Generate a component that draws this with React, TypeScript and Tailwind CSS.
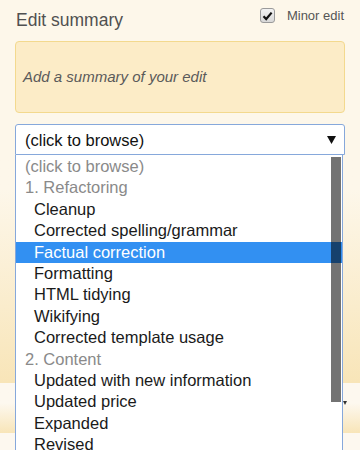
import { useState } from "react";

const options: { label: string; group?: boolean }[] = [
  { label: "(click to browse)", group: true },
  { label: "1. Refactoring", group: true },
  { label: "Cleanup" },
  { label: "Corrected spelling/grammar" },
  { label: "Factual correction" },
  { label: "Formatting" },
  { label: "HTML tidying" },
  { label: "Wikifying" },
  { label: "Corrected template usage" },
  { label: "2. Content", group: true },
  { label: "Updated with new information" },
  { label: "Updated price" },
  { label: "Expanded" },
  { label: "Revised" },
];

export default function App() {
  const [minor, setMinor] = useState(true);
  const [selected] = useState(4);

  return (
    <div
      className="relative w-[360px] h-[450px] overflow-hidden bg-[#fdf7ea] text-[#222]"
      style={{ fontFamily: '"Liberation Sans", Arial, sans-serif' }}
    >
      {/* header */}
      <div className="flex justify-between h-[41px] px-[15px]">
        <h2 className="pl-px pt-[10px] text-[17.5px] leading-[20px] text-[#505050] font-normal">
          Edit summary
        </h2>
        <label className="flex items-start gap-[12px] pt-[8px] pr-[1px] cursor-pointer">
          <span
            onClick={() => setMinor(!minor)}
            className="w-[15px] h-[15px] rounded-[3px] border border-[#9a9a9a] bg-gradient-to-b from-[#f2f2f2] to-[#d8d8d8] flex items-center justify-center"
          >
            {minor && (
              <svg width="11" height="10" viewBox="0 0 11 10">
                <path d="M1.5 5.2 L4.2 8 L9.6 1.6" fill="none" stroke="#111" strokeWidth="2.2" />
              </svg>
            )}
          </span>
          <span className="text-[13px] leading-[16px] text-[#555]">Minor edit</span>
        </label>
      </div>

      {/* summary box */}
      <div className="mx-[15px] h-[72px] rounded-[4px] border border-[#f3d98e] bg-[#fcecc7] flex items-center px-[7px]">
        <span className="italic text-[15px] text-[#5a5a5a] pt-[1px]">Add a summary of your edit</span>
      </div>

      {/* select */}
      <div className="mx-[15px] mt-[11px] h-[31px] rounded-t-[3px] border border-[#86a8db] bg-white flex items-center justify-between pl-[9px] pr-[8px]">
        <span className="text-[16.5px] leading-[20px] text-[#111]">(click to browse)</span>
        <svg width="9" height="8" viewBox="0 0 9 8">
          <path d="M0 0 H9 L4.5 8 Z" fill="#111" />
        </svg>
      </div>

      {/* content underneath the open list */}
      <div className="h-[228px] bg-gradient-to-b from-[#fdf7ea] from-[15%] to-[#f8e5b8]" />
      <div className="h-[50px] bg-gradient-to-b from-[#fdf8ef] from-[40%] to-[#f8e5b8] flex justify-end items-start pr-[13px] pt-[18px]">
        <svg width="4" height="4" viewBox="0 0 4 4">
          <path d="M0 0 H4 L2 4 Z" fill="#333" />
        </svg>
      </div>
      <div className="h-[20px] bg-[#fdf8ef]" />

      {/* open dropdown list */}
      <div className="absolute left-[15px] top-[155px] w-[328px] h-[310px] bg-white border-x border-[#86a8db] overflow-hidden">
        <ul className="pt-px">
          {options.map((o, i) => (
            <li
              key={o.label}
              className={
                "h-[21.4px] leading-[21.4px] text-[16.5px] whitespace-nowrap " +
                (o.group ? "pl-[9px] text-[#8a8a8a] " : "pl-[18px] ") +
                (i === selected ? "bg-[#3290f2] text-white" : o.group ? "" : "text-[#1a1a1a]")
              }
            >
              {o.label}
            </li>
          ))}
        </ul>
        <div className="absolute right-[1px] top-[2px] w-[10px] h-[245px] bg-black/55" />
      </div>
    </div>
  );
}
